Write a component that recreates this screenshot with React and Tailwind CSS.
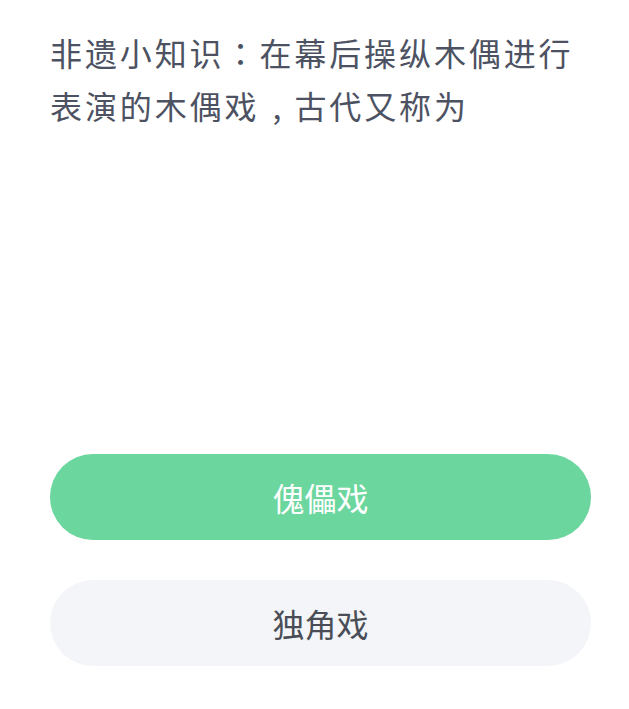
export default function App() {
  const font = { fontFamily: '"Noto Sans CJK SC", "Noto Sans", sans-serif' };
  const tc = { fontFamily: '"Noto Sans CJK TC", sans-serif' };
  return (
    <div className="w-[629px] h-[709px] bg-white overflow-hidden" style={font}>
      <div className="pl-[50px] pr-[40px] pt-[26px]">
        <p className="text-[32px] leading-[53px] tracking-[2.9px] text-[#4d5262]">
          非遗小知识<span style={tc}>：</span>在幕后操纵木偶进行表演的木偶戏<span className="inline-block w-[35px] text-center tracking-normal">,</span>古代又称为
        </p>
      </div>
      <div className="mt-[322px] px-[50px] flex flex-col gap-[40px] w-[641px]">
        <div className="h-[86px] rounded-full bg-[#6bd69e] flex items-center justify-center text-[32px] text-white">
          傀儡戏
        </div>
        <div className="h-[86px] rounded-full bg-[#f3f5f8] flex items-center justify-center text-[32px] text-[#4a4d56]">
          独角戏
        </div>
      </div>
    </div>
  );
}
